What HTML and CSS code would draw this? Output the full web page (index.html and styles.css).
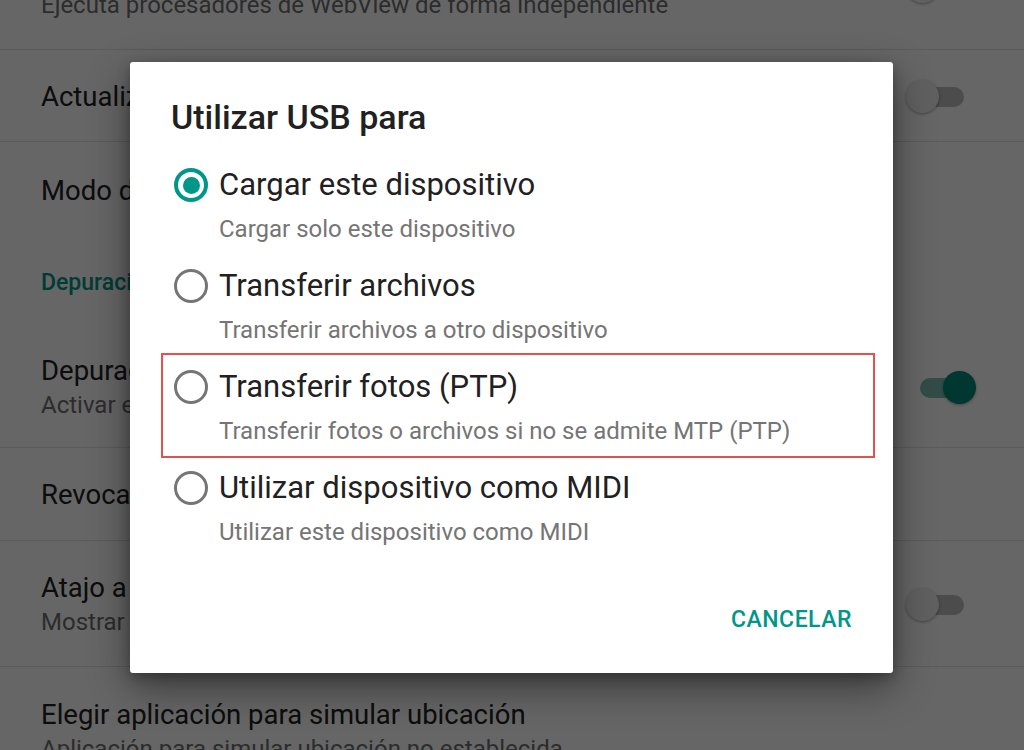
FILE: index.html
```html
<!DOCTYPE html>
<html lang="es">
<head>
<meta charset="utf-8">
<title>Utilizar USB para</title>
<link rel="stylesheet" href="styles.css">
</head>
<body>
<div class="settings">
  <div class="row row-a">
    <div class="texts">
      <div class="title">Procesador de WebView multiproceso</div>
      <div class="summary">Ejecuta procesadores de WebView de forma independiente</div>
    </div>
    <div class="switch off"><span class="track"></span><span class="thumb"></span></div>
  </div>
  <div class="row row-b">
    <div class="texts">
      <div class="title">Actualizaciones automáticas del sistema</div>
    </div>
    <div class="switch off"><span class="track"></span><span class="thumb"></span></div>
  </div>
  <div class="row row-c plain">
    <div class="texts">
      <div class="title">Modo de demostración</div>
    </div>
  </div>
  <div class="category">Depuración</div>
  <div class="row row-d">
    <div class="texts">
      <div class="title">Depuración por USB</div>
      <div class="summary">Activar el modo de depuración cuando el USB esté conectado</div>
    </div>
    <div class="switch on"><span class="track"></span><span class="thumb"></span></div>
  </div>
  <div class="row row-e">
    <div class="texts">
      <div class="title">Revocar autorizaciones de depuración USB</div>
    </div>
  </div>
  <div class="row row-f">
    <div class="texts">
      <div class="title">Atajo a informe de errores</div>
      <div class="summary">Mostrar un botón para crear un informe</div>
    </div>
    <div class="switch off"><span class="track"></span><span class="thumb"></span></div>
  </div>
  <div class="row row-g plain">
    <div class="texts">
      <div class="title">Elegir aplicación para simular ubicación</div>
      <div class="summary">Aplicación para simular ubicación no establecida</div>
    </div>
  </div>
</div>

<div class="scrim"></div>

<div class="dialog" role="dialog" aria-labelledby="dlg-title">
  <h1 class="dialog-title" id="dlg-title">Utilizar USB para</h1>
  <div class="options">
    <label class="option">
      <span class="radio checked"></span>
      <span class="opt-text">
        <span class="opt-title">Cargar este dispositivo</span>
        <span class="opt-sub">Cargar solo este dispositivo</span>
      </span>
    </label>
    <label class="option">
      <span class="radio"></span>
      <span class="opt-text">
        <span class="opt-title">Transferir archivos</span>
        <span class="opt-sub">Transferir archivos a otro dispositivo</span>
      </span>
    </label>
    <label class="option highlight">
      <span class="radio"></span>
      <span class="opt-text">
        <span class="opt-title">Transferir fotos (PTP)</span>
        <span class="opt-sub">Transferir fotos o archivos si no se admite MTP (PTP)</span>
      </span>
    </label>
    <label class="option">
      <span class="radio"></span>
      <span class="opt-text">
        <span class="opt-title">Utilizar dispositivo como MIDI</span>
        <span class="opt-sub">Utilizar este dispositivo como MIDI</span>
      </span>
    </label>
  </div>
  <div class="actions">
    <button class="btn-text" type="button">CANCELAR</button>
  </div>
</div>
</body>
</html>
```
FILE: styles.css
```css
* { box-sizing: border-box; }

html, body {
  margin: 0;
  padding: 0;
}

body {
  width: 1024px;
  height: 750px;
  overflow: hidden;
  background: #ffffff;
  font-family: Roboto, "Noto Sans", "Liberation Sans", sans-serif;
  position: relative;
}

/* ---------- background settings list ---------- */
.settings {
  margin-top: -75px;
}

.row {
  display: flex;
  align-items: center;
  justify-content: space-between;
  padding-left: 41px;
  border-bottom: 1px solid #e2e2e2;
  overflow: hidden;
}
.row.plain { border-bottom: none; }

.row-a { height: 125px; }
.row-b { height: 92px; padding-top: 2px; }
.row-c { height: 96px; }
.row-d { height: 122px; padding-top: 2px; }
.row-e { height: 93px; }
.row-f { height: 126px; padding-top: 2px; }
.row-g { height: 83px; align-items: flex-start; padding-top: 30px; }

.texts {
  display: flex;
  flex-direction: column;
  min-width: 0;
}

.title {
  font-size: 27.5px;
  line-height: 35px;
  color: #212121;
  white-space: nowrap;
}

.summary {
  font-size: 24px;
  line-height: 34px;
  color: #6f6f6f;
  white-space: nowrap;
}

.category {
  height: 88px;
  display: flex;
  align-items: center;
  padding-left: 41px;
  font-size: 23px;
  font-weight: 500;
  color: #009688;
}

.switch {
  position: relative;
  flex: none;
  width: 70px;
  height: 34px;
  margin-right: 48px;
}

.switch .track {
  position: absolute;
  left: 14px;
  right: 12px;
  top: 7px;
  height: 20px;
  border-radius: 10px;
  background: #bdbdbd;
}
.switch .thumb {
  position: absolute;
  top: 0;
  width: 33px;
  height: 33px;
  border-radius: 50%;
  background: #f1f1f1;
  box-shadow: 0 1px 3px rgba(0, 0, 0, 0.35);
}
.switch.off .thumb { left: 0; }
.switch.on .thumb { right: 0; background: #00897b; }
.switch.on .track { background: #7fbdb5; }

/* ---------- scrim ---------- */
.scrim {
  position: absolute;
  inset: 0;
  background: rgba(0, 0, 0, 0.6);
}

/* ---------- dialog ---------- */
.dialog {
  position: absolute;
  left: 130px;
  top: 62px;
  width: 763px;
  height: 611px;
  background: #ffffff;
  border-radius: 3px;
  box-shadow: 0 14px 40px rgba(0, 0, 0, 0.45), 0 4px 12px rgba(0, 0, 0, 0.25);
  padding: 35px 20px 0 33px;
  display: flex;
  flex-direction: column;
}

.dialog-title {
  margin: 0 0 16px 8px;
  font-size: 34px;
  line-height: 40px;
  font-weight: 500;
  color: #212121;
}

.options {
  display: flex;
  flex-direction: column;
}

.option {
  display: flex;
  align-items: flex-start;
  height: 101px;
  padding: 14px 0 0 11px;
  gap: 11px;
}

.option.highlight {
  outline: 2px solid #e0524c;
}

.radio {
  flex: none;
  width: 34px;
  height: 34px;
  margin-top: 1px;
  border-radius: 50%;
  border: 3px solid #757575;
  display: flex;
  align-items: center;
  justify-content: center;
}
.radio.checked {
  border-color: #009688;
  border-width: 4px;
}
.radio.checked::after {
  content: "";
  width: 17px;
  height: 17px;
  border-radius: 50%;
  background: #009688;
}

.opt-text {
  display: flex;
  flex-direction: column;
}
.opt-title {
  font-size: 31px;
  line-height: 36px;
  color: #212121;
}
.opt-sub {
  margin-top: 11px;
  font-size: 24px;
  line-height: 30px;
  color: #757575;
}

.actions {
  display: flex;
  justify-content: flex-end;
  margin-top: 48px;
  padding-right: 21px;
}

.btn-text {
  border: none;
  background: transparent;
  padding: 0;
  font-family: Roboto, "Noto Sans", "Liberation Sans", sans-serif;
  font-size: 23px;
  line-height: 30px;
  font-weight: 500;
  letter-spacing: 0.5px;
  color: #009688;
}
```
